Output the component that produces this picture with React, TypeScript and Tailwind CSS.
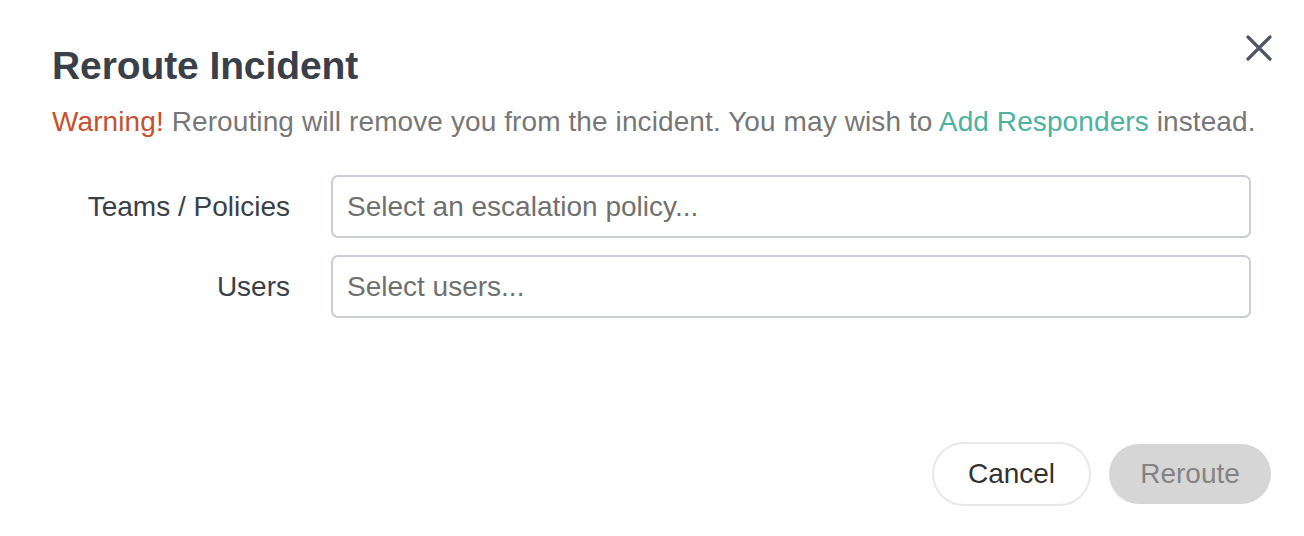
import React from "react";

const font = { fontFamily: '"Liberation Sans", Arial, Helvetica, sans-serif' };

const Field: React.FC<{ label: string; placeholder: string }> = ({
  label,
  placeholder,
}) => {
  return (
    <div className="flex items-center gap-[41px] h-[63px]">
      <label className="w-[238px] shrink-0 text-right text-[28px] text-[#3a4049]">
        {label}
      </label>
      <input
        type="text"
        placeholder={placeholder}
        className="flex-1 h-[63px] border-2 border-[#c9cdd4] rounded-[7px] pl-[14px] pr-3 text-[28px] text-[#333] placeholder:text-[#707070] outline-none"
        style={font}
      />
    </div>
  );
};

export default function App() {
  return (
    <div
      className="relative w-[1304px] h-[536px] bg-white pl-[52px] pr-[53px] pt-[42px]"
      style={font}
    >
      <button
        type="button"
        aria-label="Close"
        className="absolute top-[35px] right-[32px] w-[26px] h-[26px] text-[#4f5663]"
      >
        <svg viewBox="0 0 26 26" width="26" height="26" fill="none">
          <path
            d="M2 2 L24 24 M24 2 L2 24"
            stroke="currentColor"
            strokeWidth="3.2"
            strokeLinecap="round"
          />
        </svg>
      </button>

      <h2 className="text-[39px] leading-[48px] font-bold text-[#3a4049] tracking-[-0.1px]">
        Reroute Incident
      </h2>

      <p className="mt-[14px] text-[28px] leading-[36px] text-[#777777] whitespace-nowrap tracking-[0.1px]">
        <span className="text-[#c8502e]">Warning!</span> Rerouting will remove
        you from the incident. You may wish to{" "}
        <a className="text-[#4bb3a0]">Add Responders</a> instead.
      </p>

      <div className="mt-[35px] flex flex-col gap-[17px]">
        <Field label="Teams / Policies" placeholder="Select an escalation policy..." />
        <Field label="Users" placeholder="Select users..." />
      </div>

      <div className="mt-[124px] -mr-[20px] flex justify-end items-center gap-[18px]">
        <button
          type="button"
          className="w-[159px] h-[64px] rounded-full border-2 border-[#e8e8e8] bg-white text-[28px] text-[#333333]"
        >
          Cancel
        </button>
        <button
          type="button"
          disabled
          className="w-[162px] h-[60px] rounded-full bg-[#d6d6d6] text-[28px] text-[#838383]"
        >
          Reroute
        </button>
      </div>
    </div>
  );
}
